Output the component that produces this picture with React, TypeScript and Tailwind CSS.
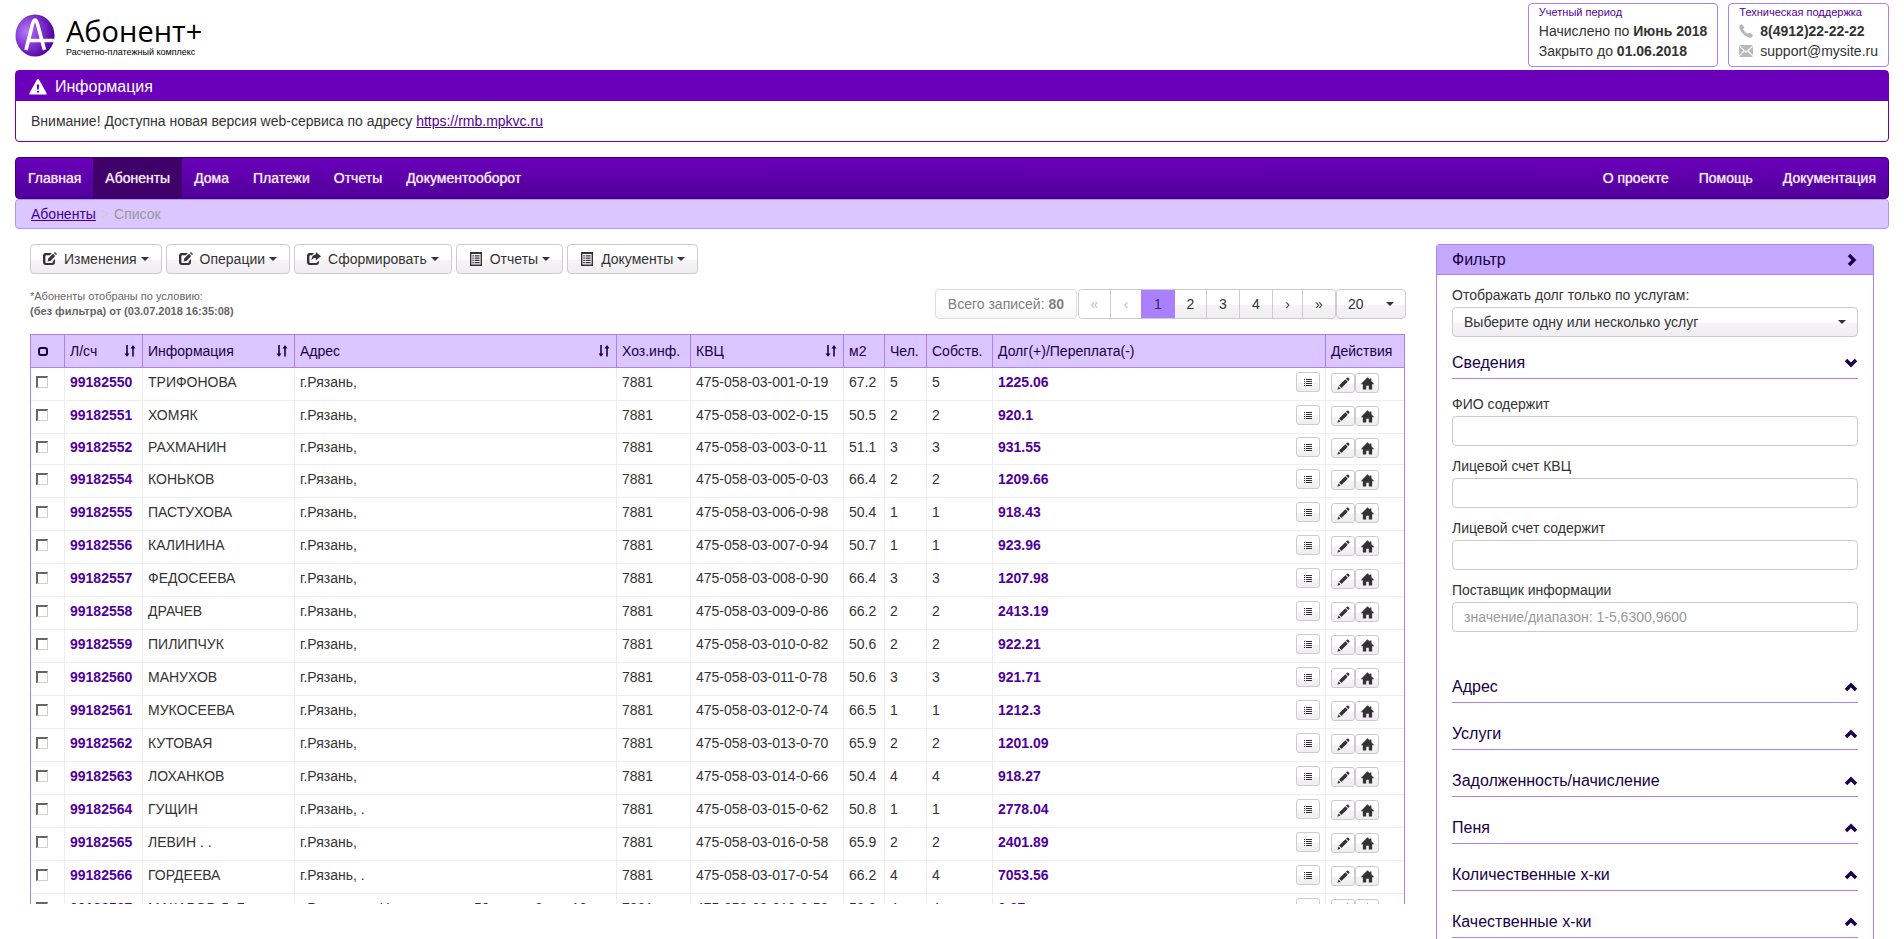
import type { ReactNode } from 'react'

type Account = {
  id: string
  name: string
  address?: string
  kvc: string
  area: string
  people: number
  debt: string
  compact?: boolean
}

const ACCOUNTS: Account[] = [
  { id: '99182550', name: 'ТРИФОНОВА', kvc: '475-058-03-001-0-19', area: '67.2', people: 5, debt: '1225.06' },
  { id: '99182551', name: 'ХОМЯК', kvc: '475-058-03-002-0-15', area: '50.5', people: 2, debt: '920.1' },
  { id: '99182552', name: 'РАХМАНИН', kvc: '475-058-03-003-0-11', area: '51.1', people: 3, debt: '931.55', compact: true },
  { id: '99182554', name: 'КОНЬКОВ', kvc: '475-058-03-005-0-03', area: '66.4', people: 2, debt: '1209.66' },
  { id: '99182555', name: 'ПАСТУХОВА', kvc: '475-058-03-006-0-98', area: '50.4', people: 1, debt: '918.43' },
  { id: '99182556', name: 'КАЛИНИНА', kvc: '475-058-03-007-0-94', area: '50.7', people: 1, debt: '923.96' },
  { id: '99182557', name: 'ФЕДОСЕЕВА', kvc: '475-058-03-008-0-90', area: '66.4', people: 3, debt: '1207.98' },
  { id: '99182558', name: 'ДРАЧЕВ', kvc: '475-058-03-009-0-86', area: '66.2', people: 2, debt: '2413.19' },
  { id: '99182559', name: 'ПИЛИПЧУК', kvc: '475-058-03-010-0-82', area: '50.6', people: 2, debt: '922.21' },
  { id: '99182560', name: 'МАНУХОВ', kvc: '475-058-03-011-0-78', area: '50.6', people: 3, debt: '921.71' },
  { id: '99182561', name: 'МУКОСЕЕВА', kvc: '475-058-03-012-0-74', area: '66.5', people: 1, debt: '1212.3' },
  { id: '99182562', name: 'КУТОВАЯ', kvc: '475-058-03-013-0-70', area: '65.9', people: 2, debt: '1201.09' },
  { id: '99182563', name: 'ЛОХАНКОВ', kvc: '475-058-03-014-0-66', area: '50.4', people: 4, debt: '918.27' },
  {
    id: '99182564',
    name: 'ГУЩИН',
    address: 'г.Рязань, .',
    kvc: '475-058-03-015-0-62',
    area: '50.8',
    people: 1,
    debt: '2778.04',
  },
  { id: '99182565', name: 'ЛЕВИН . .', kvc: '475-058-03-016-0-58', area: '65.9', people: 2, debt: '2401.89' },
  {
    id: '99182566',
    name: 'ГОРДЕЕВА',
    address: 'г.Рязань, .',
    kvc: '475-058-03-017-0-54',
    area: '66.2',
    people: 4,
    debt: '7053.56',
  },
  {
    id: '99182567',
    name: 'МАКАРОВ Л. Б.',
    address: 'г.Рязань, ул.Новоселов, д. 50, корп. 6, кв. 18',
    kvc: '475-058-03-018-0-50',
    area: '50.9',
    people: 4,
    debt: '0.07',
  },
]

const COLUMNS = [
  { title: 'Л/сч', width: 'w-[78px]', sortable: true },
  { title: 'Информация', width: 'w-[152px]', sortable: true },
  { title: 'Адрес', width: '', sortable: true },
  { title: 'Хоз.инф.', width: 'w-[74px]', sortable: false },
  { title: 'КВЦ', width: 'w-[153px]', sortable: true },
  { title: 'м2', width: 'w-[41px]', sortable: false },
  { title: 'Чел.', width: 'w-[42px]', sortable: false },
  { title: 'Собств.', width: 'w-[66px]', sortable: false },
  { title: 'Долг(+)/Переплата(-)', width: 'w-[333px]', sortable: false },
  { title: 'Действия', width: 'w-[79px]', sortable: false },
]

const FIELDS = [
  { id: 'fio', label: 'ФИО содержит', placeholder: '' },
  { id: 'kvc', label: 'Лицевой счет КВЦ', placeholder: '' },
  { id: 'account', label: 'Лицевой счет содержит', placeholder: '' },
  { id: 'provider', label: 'Поставщик информации', placeholder: 'значение/диапазон: 1-5,6300,9600' },
]

const SECTIONS = [
  'Адрес',
  'Услуги',
  'Задолженность/начисление',
  'Пеня',
  'Количественные х-ки',
  'Качественные х-ки',
]

const MENU = ['Главная', 'Абоненты', 'Дома', 'Платежи', 'Отчеты', 'Документооборот']
const MENU_RIGHT = ['О проекте', 'Помощь', 'Документация']

const BUTTON_FACE =
  'border border-[#ccc] bg-linear-to-b from-white from-50% via-[#f7f4f7] via-55% to-[#f0edf0]'

type IconProps = { className?: string; children: ReactNode }

function Icon({ className = 'size-[14px]', children }: IconProps) {
  return (
    <svg viewBox="0 0 14 14" fill="currentColor" aria-hidden="true" className={`shrink-0 ${className}`}>
      {children}
    </svg>
  )
}

const IconEdit = () => (
  <Icon>
    <path d="M9 1H3.200A3 3 0 0 0 0 4v6a3 3 0 0 0 3.200 3h5.600A3 3 0 0 0 12 10V7L9.800 9.200v.8a1 1 0 0 1-1 1H3.400a1 1 0 0 1-1-1V4.200a1 1 0 0 1 1-1h3.400z" />
    <path d="M4.600 9.400l.7-3L10 1.700l2.200 2.200L7.600 8.700zM10.900.9l.9-.9L14 2.100l-.9.9z" />
  </Icon>
)

const IconShare = () => (
  <Icon>
    <path d="M7 1H3.200A3 3 0 0 0 0 4v6a3 3 0 0 0 3.200 3h5.600A3 3 0 0 0 12 10V8.800L9.800 10.400a1 1 0 0 1-1 .6H3.400a1 1 0 0 1-1-1V4.200a1 1 0 0 1 1-1h1.800z" />
    <path d="M8.800 0L14 4.300 8.800 8.600V6C6.800 6 5.600 6.600 4.400 8.400 4.600 4.800 6.200 2.700 8.800 2.600z" />
  </Icon>
)

const IconListAlt = () => (
  <Icon>
    <path fillRule="evenodd" d="M1 0h12v14H1zM2.400 2v10.600h9.200V2z" />
    <path d="M3.300 3.200h1.500v1.200H3.300zm2.300 0h5v1.200h-5zM3.300 5.500h1.500v1.200H3.300zm2.300 0h5v1.200h-5zM3.300 7.800h1.500V9H3.300zm2.300 0h5V9h-5zM3.300 10.100h1.500v1.200H3.300zm2.300 0h5v1.200h-5z" />
  </Icon>
)

const IconList = () => (
  <svg viewBox="0 0 8 7" fill="#333" shapeRendering="crispEdges" aria-hidden="true" className="h-[7px] w-2">
    <path d="M0 0h1v1H0zM2 0h6v1H2zM0 2h1v1H0zM2 2h6v1H2zM0 4h1v1H0zM2 4h6v1H2zM0 6h1v1H0zM2 6h6v1H2z" />
  </svg>
)

const IconPencil = () => (
  <Icon className="size-[13px]">
    <path d="M10.800.8a1 1 0 0 1 1.400 0l1 1a1 1 0 0 1 0 1.400l-1.100 1.100-2.400-2.400zM9 2.400L11.600 5 4.800 11.800 2.200 9.200zM1.600 10.200l2.200 2.200-3.400 1.200z" />
  </Icon>
)

const IconHome = () => (
  <Icon className="size-[13px]">
    <path d="M7 .4l2.400 2.400V1.600h1.800v3L14.200 7.800H12V13.500H8.400V9.500H5.600v4H2V7.800H-.2z" />
  </Icon>
)

const IconSort = () => (
  <Icon>
    <path d="M3.200 1h1.600v8.400h1.700L4 12.800 1.500 9.400h1.700zM9.200 12.600h1.600V4.600h1.700L10 1 7.500 4.600h1.700z" />
  </Icon>
)

const IconChevron = ({ className }: { className: string }) => (
  <Icon className={className}>
    <path d="M2.800 3.200L5.200.8 11.400 7l-6.200 6.200-2.400-2.400L6.600 7z" />
  </Icon>
)

const IconPhone = () => (
  <Icon>
    <path d="M.6 1.500L2.800 0l2.700 3.700-1.400 1.600c1 1.900 2.500 3.500 4.700 4.500l1.600-1.400L14 11.200 12.600 13.400c-3.400 1.200-6.800-1.400-8.900-3.800C1.400 7 -.2 4 .6 1.500z" />
  </Icon>
)

const IconMail = () => (
  <Icon>
    <path d="M0 1h14L7 7.400zM0 2.500l4.400 4.100L0 11.200zm14 0v8.700L9.600 6.600zM5.400 7.500L7 9l1.600-1.500L14 13H0z" />
  </Icon>
)

const IconWarning = () => (
  <svg viewBox="0 0 18 16" aria-hidden="true" className="h-4 w-[18px] shrink-0">
    <path d="M8 .6Q9-.6 10 .6L17.500 14Q18 15.500 16.500 15.500H1.500Q0 15.500.5 14z" fill="#fff" />
    <path d="M7.800 5.500h2.400L9.800 10.500H8.200zM8 11.700h2v1.900H8z" fill="#6a00ba" />
  </svg>
)

const Caret = () => (
  <span className="inline-block border-x-4 border-t-4 border-x-transparent border-t-[#333]" aria-hidden="true" />
)

function Logo() {
  return (
    <a href="#" className="flex items-center gap-[9px] text-black">
      <svg viewBox="0 0 42 43" aria-hidden="true" className="h-[43px] w-[42px]">
        <defs>
          <radialGradient id="ball" cx="0.3" cy="0.4" r="0.7">
            <stop offset="0" stopColor="#b47cf5" />
            <stop offset="0.5" stopColor="#8436d4" />
            <stop offset="1" stopColor="#50009a" />
          </radialGradient>
        </defs>
        <ellipse cx="20" cy="21.500" rx="19.500" ry="21" fill="url(#ball)" />
        <path
          d="M11 36L17.500 10q2.500-8 5 0L29.500 36M14 26.500h25"
          fill="none"
          stroke="#fff"
          strokeWidth="3.600"
        />
      </svg>
      <span className="flex flex-col">
        <span className="font-['Open_Sans','Noto_Sans',sans-serif] text-[29px] leading-8">Абонент+</span>
        <span className="text-[9px] leading-[10px]">Расчетно-платежный комплекс</span>
      </span>
    </a>
  )
}

type ToolButtonProps = { icon: ReactNode; children: ReactNode }

function ToolButton({ icon, children }: ToolButtonProps) {
  return (
    <button type="button" className={`flex h-[30px] items-center rounded px-3 text-[#333] ${BUTTON_FACE}`}>
      {icon}
      <span className="ml-[7px] mr-1">{children}</span>
      <Caret />
    </button>
  )
}

function SmallButton({ label, children }: { label: string; children: ReactNode }) {
  return (
    <button
      type="button"
      aria-label={label}
      className={`flex h-5 w-6 items-center justify-center rounded-[3px] text-[#333] ${BUTTON_FACE}`}
    >
      {children}
    </button>
  )
}

function Pager() {
  const cell = 'flex h-full items-center justify-center border-r border-[#ccc]'
  return (
    <div className="flex h-[30px]">
      <div className="mr-px flex items-center rounded border border-[#ddd] bg-linear-to-b from-white from-50% to-[#f7f6f7] px-3 text-[#808080]">
        Всего записей:&nbsp;<b>80</b>
      </div>
      <div className={`flex overflow-hidden rounded ${BUTTON_FACE}`}>
        <button type="button" disabled className={`${cell} w-8 bg-white text-[#bbb]`}>«</button>
        <button type="button" disabled className={`${cell} w-[30px] border-r-0 bg-white text-[#bbb]`}>‹</button>
        <button type="button" className="w-[34px] bg-[#ab80ff] text-[#333]">1</button>
        <button type="button" className={`${cell} w-8`}>2</button>
        <button type="button" className={`${cell} w-[33px]`}>3</button>
        <button type="button" className={`${cell} w-[33px]`}>4</button>
        <button type="button" className={`${cell} w-[30px]`}>›</button>
        <button type="button" className="w-8">»</button>
      </div>
      <div className="relative">
        <select
          aria-label="Записей на странице"
          className={`h-[30px] w-[70px] appearance-none rounded pl-[11px] text-[#333] ${BUTTON_FACE}`}
        >
          <option>20</option>
          <option>50</option>
        </select>
        <span className="pointer-events-none absolute inset-y-0 right-3 flex items-center">
          <Caret />
        </span>
      </div>
    </div>
  )
}

const CHECKBOX =
  'block size-3 appearance-none border-t-2 border-l-2 border-r border-b border-t-[#666] border-l-[#666] border-r-[#d4d0c8] border-b-[#d4d0c8] bg-white'

function AccountsTable() {
  return (
    <table className="w-full table-fixed border-separate border-spacing-0 border-x border-[#ab80ff] text-left">
      <thead className="bg-[#dcc6ff] text-[#1a0047]">
        <tr className="h-[34px]">
          <th className="w-[33px] border-y border-[#ab80ff] pl-[7px]">
            <button
              type="button"
              aria-label="Выбрать все"
              className="block h-[9px] w-[10px] rounded-[3px] border-2 border-[#1a0047]"
            />
          </th>
          {COLUMNS.map(({ title, width, sortable }) => (
            <th key={title} className={`${width} border-y border-l border-[#ab80ff] px-[5px] font-normal`}>
              <span className="flex items-center justify-between whitespace-nowrap">
                {title}
                {sortable && <IconSort />}
              </span>
            </th>
          ))}
        </tr>
      </thead>
      <tbody className="[&_td]:border-b [&_td]:border-l [&_td]:border-[#eee] [&_td]:px-[5px] [&_td]:pb-1 [&_td:first-child]:border-l-0">
        {ACCOUNTS.map((row) => (
          <tr key={row.id} className={row.compact ? 'h-[31px]' : 'h-[33px]'}>
            <td>
              <input type="checkbox" aria-label={`Выбрать ${row.id}`} className={CHECKBOX} />
            </td>
            <td>
              <a href="#" className="font-bold text-[#50009a]">{row.id}</a>
            </td>
            <td>{row.name}</td>
            <td>{row.address ?? 'г.Рязань,'}</td>
            <td>7881</td>
            <td>{row.kvc}</td>
            <td>{row.area}</td>
            <td>{row.people}</td>
            <td>{row.people}</td>
            <td>
              <span className="flex items-center justify-between">
                <a href="#" className="font-bold text-[#50009a]">{row.debt}</a>
                <SmallButton label="Детализация">
                  <IconList />
                </SmallButton>
              </span>
            </td>
            <td>
              <span className="flex pt-[2px]">
                <SmallButton label="Изменить">
                  <IconPencil />
                </SmallButton>
                <SmallButton label="Дом">
                  <IconHome />
                </SmallButton>
              </span>
            </td>
          </tr>
        ))}
      </tbody>
    </table>
  )
}

function SectionHeader({ title, open = false }: { title: string; open?: boolean }) {
  return (
    <button
      type="button"
      aria-expanded={open}
      className="flex h-8 w-full items-center justify-between border-b border-[#ab80ff] text-base text-[#1a0047]"
    >
      {title}
      <IconChevron className={open ? 'size-[14px] rotate-90' : 'size-[14px] -rotate-90'} />
    </button>
  )
}

function FilterPanel() {
  return (
    <aside className="w-[438px] shrink-0 rounded-t border border-b-0 border-[#ab80ff]">
      <h2 className="flex h-[30px] items-center justify-between border-b border-[#ab80ff] bg-[#c5a8ff] pl-[15px] pr-[14px] text-base text-[#1a0047]">
        Фильтр
        <IconChevron className="size-[14px]" />
      </h2>
      <div className="px-[15px] pt-[10px]">
        <label htmlFor="services" className="block h-[22px] leading-5">
          Отображать долг только по услугам:
        </label>
        <div className="relative">
          <select
            id="services"
            className={`h-[30px] w-full appearance-none rounded px-[11px] text-[#333] ${BUTTON_FACE}`}
          >
            <option>Выберите одну или несколько услуг</option>
          </select>
          <span className="pointer-events-none absolute inset-y-0 right-3 flex items-center">
            <Caret />
          </span>
        </div>
        <div className="mt-[10px]">
          <SectionHeader title="Сведения" open />
        </div>
        <div className="mb-[39px] mt-[15px] flex flex-col gap-[10px]">
          {FIELDS.map(({ id, label, placeholder }) => (
            <div key={id}>
              <label htmlFor={id} className="block h-[22px] leading-5">{label}</label>
              <input
                id={id}
                type="text"
                placeholder={placeholder}
                className="block h-[30px] w-full rounded border border-[#ccc] px-[11px] placeholder:text-[#999]"
              />
            </div>
          ))}
        </div>
        <div className="flex flex-col gap-[15px]">
          {SECTIONS.map((title) => (
            <SectionHeader key={title} title={title} />
          ))}
        </div>
      </div>
    </aside>
  )
}

export default function App() {
  return (
    <div className="flex h-screen flex-col overflow-hidden bg-white px-[15px] font-['Liberation_Sans',Arial,sans-serif] text-sm leading-5 text-[#333]">
      <header className="flex h-[70px] shrink-0 items-start justify-between pt-[3px]">
        <div className="pt-[11px]">
          <Logo />
        </div>
        <div className="flex gap-[10px]">
          <div className="h-16 rounded border border-[#ab80ff] px-[10px]">
            <p className="text-[11px] leading-[17px] text-[#50009a]">Учетный период</p>
            <p>Начислено по <b>Июнь 2018</b></p>
            <p>Закрыто до <b>01.06.2018</b></p>
          </div>
          <div className="h-16 rounded border border-[#ab80ff] px-[10px]">
            <p className="text-[11px] leading-[17px] text-[#50009a]">Техническая поддержка</p>
            <p className="flex items-center gap-[7px]">
              <span className="text-[#b8b8b8]"><IconPhone /></span>
              <b>8(4912)22-22-22</b>
            </p>
            <p className="flex items-center gap-[7px]">
              <span className="text-[#b8b8b8]"><IconMail /></span>
              support@mysite.ru
            </p>
          </div>
        </div>
      </header>

      <section className="shrink-0 rounded border border-[#6a00ba]">
        <h2 className="flex h-[30px] items-center gap-2 bg-[#6a00ba] pl-[13px] pt-px text-base text-white">
          <IconWarning />
          Информация
        </h2>
        <p className="h-10 pl-[15px] pt-[10px]">
          Внимание! Доступна новая версия web-сервиса по адресу{' '}
          <a href="https://rmb.mpkvc.ru" className="text-[#50009a] underline">https://rmb.mpkvc.ru</a>
        </p>
      </section>

      <nav className="mt-[15px] flex h-[42px] shrink-0 justify-between rounded border border-[#3c0070] bg-linear-to-b from-[#6a00ba] to-[#50009a] text-[#f4ecfc] text-shadow-[0_0_1px_#ffffffcc]">
        <div className="flex">
          {MENU.map((item) => (
            <a
              key={item}
              href="#"
              className={`flex items-center px-3 ${item === 'Абоненты' ? 'bg-[#40006a]' : ''}`}
            >
              {item}
            </a>
          ))}
        </div>
        <div className="flex gap-[30px] pr-3">
          {MENU_RIGHT.map((item) => (
            <a key={item} href="#" className="flex items-center">{item}</a>
          ))}
        </div>
      </nav>
      <div className="flex h-[30px] shrink-0 items-center gap-[5px] rounded border border-[#b592ff] bg-[#dcc6ff] pl-[15px]">
        <a href="#" className="text-[#3c00a0] underline">Абоненты</a>
        <span className="text-[#ccc]">&gt;</span>
        <span className="text-[#999]">Список</span>
      </div>

      <main className="flex min-h-0 flex-1 gap-[30px] px-[15px] pt-[15px]">
        <div className="flex min-w-0 flex-1 flex-col pb-[35px]">
          <div className="flex gap-1">
            <ToolButton icon={<IconEdit />}>Изменения</ToolButton>
            <ToolButton icon={<IconEdit />}>Операции</ToolButton>
            <ToolButton icon={<IconShare />}>Сформировать</ToolButton>
            <ToolButton icon={<IconListAlt />}>Отчеты</ToolButton>
            <ToolButton icon={<IconListAlt />}>Документы</ToolButton>
          </div>
          <div className="mt-[15px] flex items-start justify-between">
            <p className="text-[11px] leading-[15px] text-[#666]">
              *Абоненты отобраны по условию:
              <br />
              <b>(без фильтра) от (03.07.2018 16:35:08)</b>
            </p>
            <Pager />
          </div>
          <div className="mr-px mt-[15px] min-h-0 flex-1 overflow-hidden">
            <AccountsTable />
          </div>
        </div>
        <FilterPanel />
      </main>
    </div>
  )
}
